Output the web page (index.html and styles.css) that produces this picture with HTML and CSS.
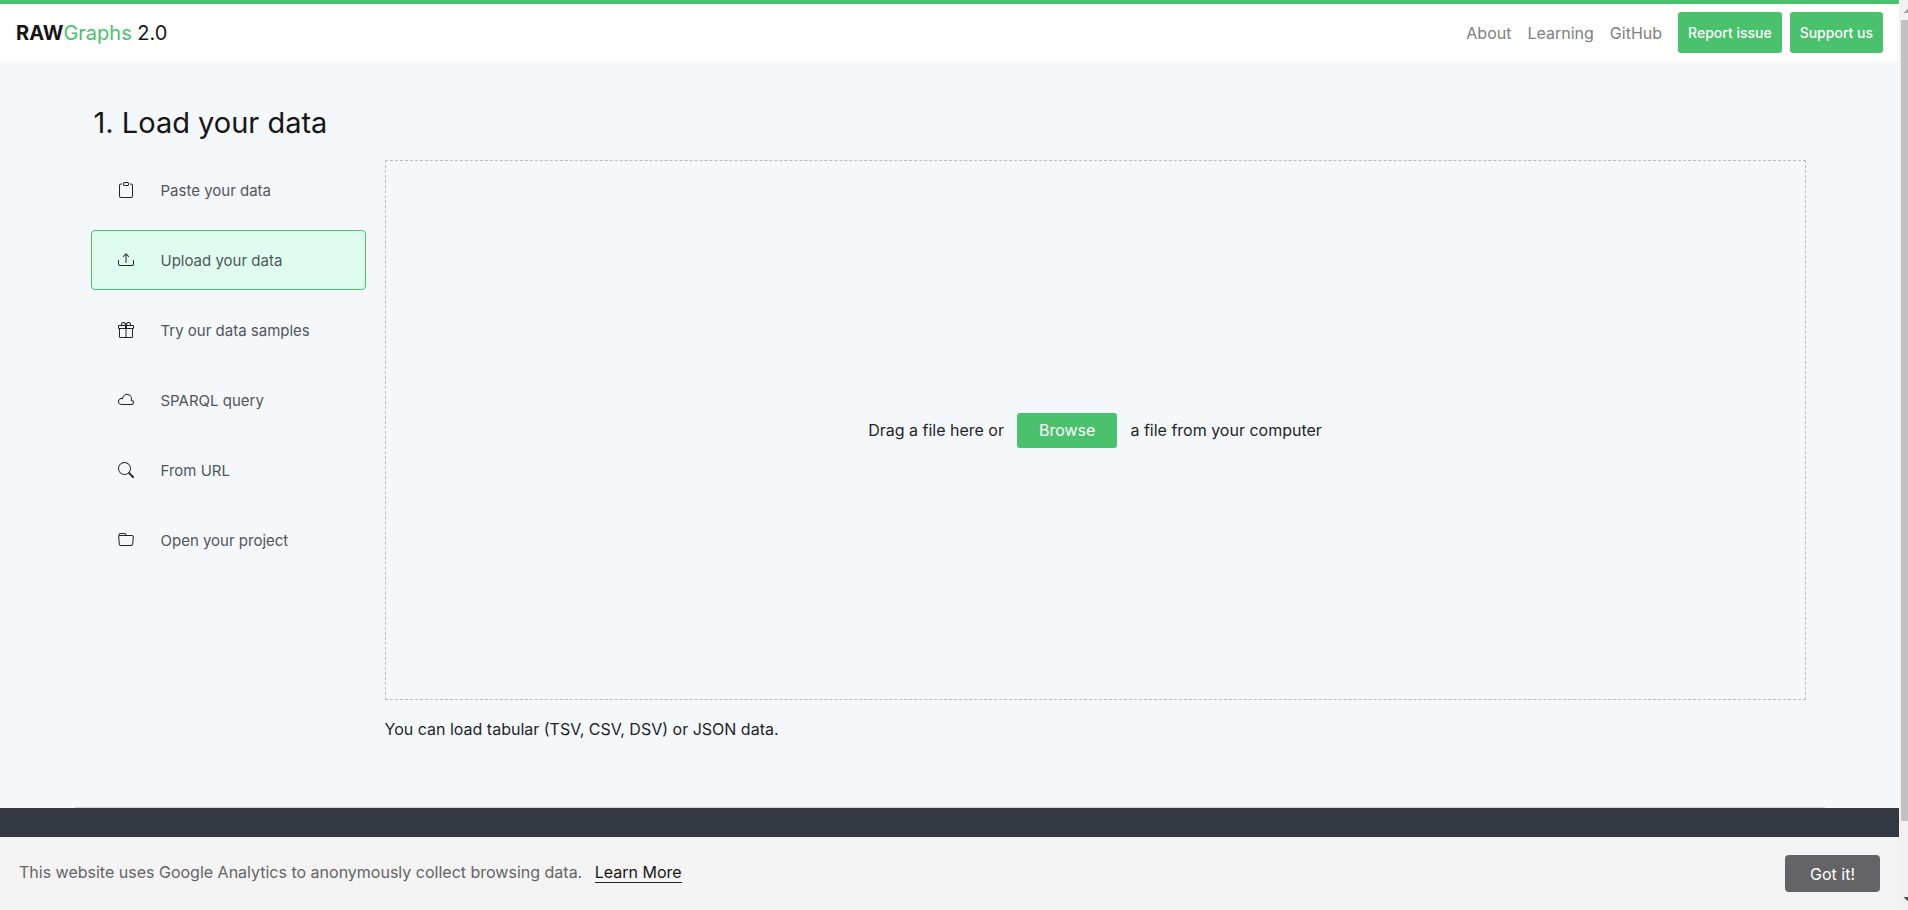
FILE: index.html
```html
<!DOCTYPE html>
<html lang="en">
<head>
<meta charset="utf-8">
<title>RAWGraphs 2.0</title>
<link rel="stylesheet" href="styles.css">
</head>
<body>
<div class="window">
  <div class="page">
    <header class="navbar">
      <a class="brand" href="#"><b>RAW</b><span class="brand-accent">Graphs</span> 2.0</a>
      <nav class="nav">
        <a class="nav-link" href="#">About</a>
        <a class="nav-link" href="#">Learning</a>
        <a class="nav-link" href="#">GitHub</a>
        <a class="nav-button" href="#">Report issue</a>
        <a class="nav-button" href="#">Support us</a>
      </nav>
    </header>

    <main class="section">
      <h1 class="title">1. Load your data</h1>
      <div class="loader">
        <div class="options">
          <button class="option" type="button">
            <svg class="icon" viewBox="0 0 16 16" fill="currentColor" fill-rule="evenodd"><path d="M4 1.5H3a2 2 0 0 0-2 2V14a2 2 0 0 0 2 2h10a2 2 0 0 0 2-2V3.5a2 2 0 0 0-2-2h-1v1h1a1 1 0 0 1 1 1V14a1 1 0 0 1-1 1H3a1 1 0 0 1-1-1V3.5a1 1 0 0 1 1-1h1v-1z"/><path d="M9.500 1h-3a.5.5 0 0 0-.5.5v1a.5.5 0 0 0 .5.5h3a.5.5 0 0 0 .5-.5v-1a.5.5 0 0 0-.5-.5zm-3-1A1.500 1.500 0 0 0 5 1.500v1A1.500 1.500 0 0 0 6.500 4h3A1.500 1.500 0 0 0 11 2.500v-1A1.500 1.500 0 0 0 9.500 0h-3z"/></svg>
            <span>Paste your data</span>
          </button>
          <button class="option option-active" type="button">
            <svg class="icon" viewBox="0 0 16 16" fill="currentColor" fill-rule="evenodd"><path d="M.5 8a.5.5 0 0 1 .5.5V12a1 1 0 0 0 1 1h12a1 1 0 0 0 1-1V8.500a.5.5 0 0 1 1 0V12a2 2 0 0 1-2 2H2a2 2 0 0 1-2-2V8.500A.5.5 0 0 1 .5 8zM5 4.854a.5.5 0 0 0 .707 0L8 2.560l2.293 2.293A.5.5 0 1 0 11 4.146L8.354 1.500a.5.5 0 0 0-.708 0L5 4.146a.5.5 0 0 0 0 .708z"/><path d="M8 2a.5.5 0 0 1 .5.5v8a.5.5 0 0 1-1 0v-8A.5.5 0 0 1 8 2z"/></svg>
            <span>Upload your data</span>
          </button>
          <button class="option" type="button">
            <svg class="icon" viewBox="0 0 16 16" fill="currentColor"><path d="M3 2.500a2.500 2.500 0 0 1 5 0 2.500 2.500 0 0 1 5 0v.006c0 .07 0 .27-.038.494H15a1 1 0 0 1 1 1v2a1 1 0 0 1-1 1v7.500a1.500 1.500 0 0 1-1.500 1.500h-11A1.500 1.500 0 0 1 1 14.500V7a1 1 0 0 1-1-1V4a1 1 0 0 1 1-1h2.038A2.968 2.968 0 0 1 3 2.506V2.500zm1.068.5H7v-.5a1.500 1.500 0 1 0-3 0c0 .085.002.274.045.43a.522.522 0 0 0 .023.07zM9 3h2.932a.56.56 0 0 0 .023-.07c.043-.156.045-.345.045-.43a1.500 1.500 0 0 0-3 0V3zM1 4v2h6V4H1zm8 0v2h6V4H9zm5 3H8.500v8h5a.5.5 0 0 0 .5-.5V7zm-6.500 8V7H2v7.500a.5.5 0 0 0 .5.5h5z"/></svg>
            <span>Try our data samples</span>
          </button>
          <button class="option" type="button">
            <svg class="icon" viewBox="0 0 16 16" fill="currentColor" fill-rule="evenodd"><path d="M4.887 7.200l-.964-.165A2.500 2.500 0 1 0 3.500 12h10a1.500 1.500 0 0 0 .237-2.981L12.700 8.854l.216-1.028a4 4 0 1 0-7.843-1.587l-.185.960zm9.084.341a5 5 0 0 0-9.880-1.492A3.500 3.500 0 1 0 3.500 13h9.999a2.500 2.500 0 0 0 .394-4.968c.033-.16.060-.324.077-.490z"/></svg>
            <span>SPARQL query</span>
          </button>
          <button class="option" type="button">
            <svg class="icon" viewBox="0 0 16 16" fill="currentColor" fill-rule="evenodd"><path d="M10.442 10.442a1 1 0 0 1 1.415 0l3.850 3.850a1 1 0 0 1-1.414 1.415l-3.850-3.850a1 1 0 0 1 0-1.415z"/><path d="M6.500 12a5.500 5.500 0 1 0 0-11 5.500 5.500 0 0 0 0 11zM13 6.500a6.500 6.500 0 1 1-13 0 6.500 6.500 0 0 1 13 0z"/></svg>
            <span>From URL</span>
          </button>
          <button class="option" type="button">
            <svg class="icon" viewBox="0 0 16 16" fill="currentColor" fill-rule="evenodd"><path d="M9.828 4a3 3 0 0 1-2.120-.879l-.830-.828A1 1 0 0 0 6.173 2H2.500a1 1 0 0 0-1 .981L1.546 4h-1L.5 3a2 2 0 0 1 2-2h3.672a2 2 0 0 1 1.414.586l.828.828A2 2 0 0 0 9.828 3v1z"/><path d="M13.810 4H2.190a1 1 0 0 0-.996 1.090l.637 7a1 1 0 0 0 .995.910h10.348a1 1 0 0 0 .995-.910l.637-7A1 1 0 0 0 13.810 4zM2.190 3A2 2 0 0 0 .198 5.181l.637 7A2 2 0 0 0 2.826 14h10.348a2 2 0 0 0 1.991-1.819l.637-7A2 2 0 0 0 13.810 3H2.190z"/></svg>
            <span>Open your project</span>
          </button>
        </div>
        <div class="panel">
          <div class="dropzone">
            <span>Drag a file here or</span>
            <button class="browse" type="button">Browse</button>
            <span>a file from your computer</span>
          </div>
          <p class="hint">You can load tabular (TSV, CSV, DSV) or JSON data.</p>
        </div>
      </div>
    </main>
    <footer class="footer"></footer>

    <div class="cookies">
      <p class="cookies-text">This website uses Google Analytics to anonymously collect browsing data. <a class="cookies-link" href="#">Learn More</a></p>
      <button class="cookies-button" type="button">Got it!</button>
    </div>
  </div>

  <div class="scrollbar" aria-hidden="true">
    <svg class="arrow" viewBox="0 0 9 20"><path d="M5 13h4v-4h-1v1h-1v1h-1v1h-1z" fill="#a3a3a3"/></svg>
    <div class="thumb"></div>
    <svg class="arrow" viewBox="0 0 9 20"><path d="M5 7h4v4h-1v-1h-1v-1h-1v-1h-1z" fill="#505050"/></svg>
  </div>
</div>
</body>
</html>
```
FILE: styles.css
```css
* {
  box-sizing: border-box;
}

body {
  margin: 0;
  font-family: Inter, "Liberation Sans", sans-serif;
  font-size: 16px;
  line-height: 24px;
  color: #212529;
  background: #f4f8fb;
}

a {
  text-decoration: none;
}

button {
  font-family: inherit;
  cursor: pointer;
}

.window {
  display: flex;
  height: 100vh;
  overflow: hidden;
}

.page {
  flex: 1;
  display: flex;
  flex-direction: column;
  min-width: 0;
}

.navbar {
  display: flex;
  align-items: center;
  justify-content: space-between;
  padding: 8px 16px 9px;
  border-top: 4px solid #4ac16d;
  background: #fff;
}

.brand {
  font-size: 20px;
  line-height: 30px;
  color: #161616;
}

.brand b {
  font-weight: 700;
}

.brand-accent {
  color: #4ac16d;
}

.nav {
  display: flex;
  align-items: center;
  gap: 16px;
}

.nav-link {
  color: #808080;
}

.nav-button {
  padding: 8px 10px;
  border-radius: 3px;
  font-size: 14px;
  line-height: 25px;
  font-weight: 500;
  color: #fff;
  background: #4ac16d;
}

.nav-button + .nav-button {
  margin-left: -8px;
}

.section {
  flex: 1;
  width: 100%;
  max-width: 1750px;
  margin: 0 auto;
  padding: 41px 19px 0 16px;
  border-bottom: 1px solid #ced2d5;
}

.title {
  margin: 0 0 17px 3px;
  font-size: 29px;
  line-height: 40px;
  font-weight: 400;
  color: #161616;
}

.loader {
  display: grid;
  grid-template-columns: 275px 1fr;
  gap: 19px;
}

.options {
  display: flex;
  flex-direction: column;
  gap: 10px;
}

.option {
  display: flex;
  align-items: center;
  gap: 27px;
  height: 60px;
  padding: 0 26px;
  border: 1px solid transparent;
  border-radius: 4px;
  background: transparent;
  font-size: 15px;
  color: #50565c;
}

.option-active {
  border-color: #4ac16d;
  background: #defdef;
}

.icon {
  width: 16px;
  height: 16px;
  color: #212529;
}

.dropzone {
  display: flex;
  align-items: center;
  justify-content: center;
  gap: 13px;
  height: 540px;
  border: 1px dashed #b8bcc0;
}

.browse {
  height: 35px;
  padding: 0 22px;
  border: 0;
  border-radius: 3px;
  font-size: 16px;
  color: #fff;
  background: #4ac16d;
}

.hint {
  margin: 17px 0 0;
}

.footer {
  height: 29px;
  background: #343841;
}

.cookies {
  display: flex;
  align-items: center;
  justify-content: space-between;
  height: 73px;
  padding: 0 19px;
  background: #f4f4f4;
}

.cookies-text {
  margin: 0;
  padding-bottom: 3px;
  color: #646466;
}

.cookies-link {
  display: inline-block;
  margin-left: 8px;
  line-height: 20px;
  border-bottom: 1px solid #212529;
  color: #161616;
}

.cookies-button {
  height: 37px;
  padding: 0 25px;
  border: 0;
  border-radius: 4px;
  font-size: 16px;
  color: #fff;
  background: #646466;
}

.scrollbar {
  display: flex;
  flex-direction: column;
  width: 9px;
  background: #f1f1f1;
}

.arrow {
  width: 9px;
  height: 20px;
}

.thumb {
  height: 88%;
  margin: 0 0 auto 2px;
  background: #c1c1c1;
}
```
